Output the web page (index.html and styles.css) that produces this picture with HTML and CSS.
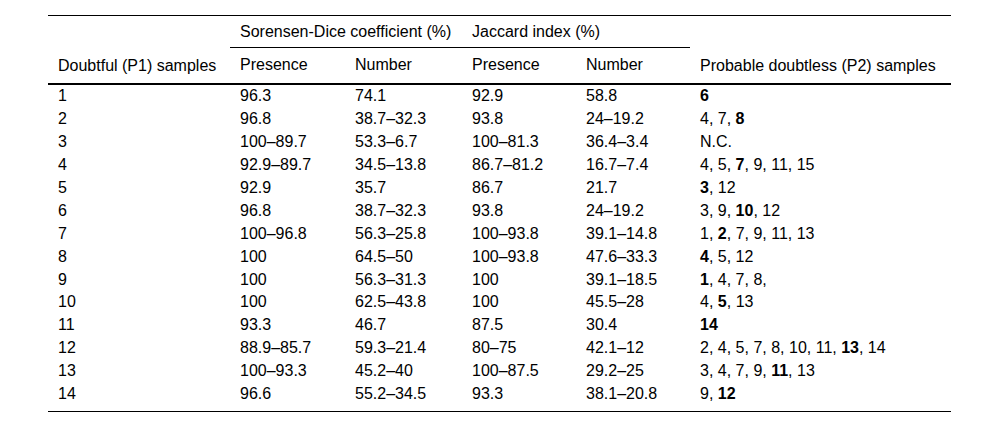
FILE: index.html
```html
<!DOCTYPE html>
<html>
<head>
<meta charset="utf-8">
<link rel="stylesheet" href="styles.css">
</head>
<body>
<table class="data">
  <colgroup>
    <col class="c1"><col class="c2"><col class="c3"><col class="c4"><col class="c5"><col class="c6">
  </colgroup>
  <thead>
    <tr class="h1">
      <th rowspan="2" class="bottom">Doubtful (P1) samples</th>
      <th colspan="2" class="group">Sorensen-Dice coefficient (%)</th>
      <th colspan="2" class="group">Jaccard index (%)</th>
      <th rowspan="2" class="bottom">Probable doubtless (P2) samples</th>
    </tr>
    <tr class="h2">
      <th>Presence</th><th>Number</th><th>Presence</th><th>Number</th>
    </tr>
  </thead>
  <tbody>
    <tr><td>1</td><td>96.3</td><td>74.1</td><td>92.9</td><td>58.8</td><td><b>6</b></td></tr>
    <tr><td>2</td><td>96.8</td><td>38.7–32.3</td><td>93.8</td><td>24–19.2</td><td>4, 7, <b>8</b></td></tr>
    <tr><td>3</td><td>100–89.7</td><td>53.3–6.7</td><td>100–81.3</td><td>36.4–3.4</td><td>N.C.</td></tr>
    <tr><td>4</td><td>92.9–89.7</td><td>34.5–13.8</td><td>86.7–81.2</td><td>16.7–7.4</td><td>4, 5, <b>7</b>, 9, 11, 15</td></tr>
    <tr><td>5</td><td>92.9</td><td>35.7</td><td>86.7</td><td>21.7</td><td><b>3</b>, 12</td></tr>
    <tr><td>6</td><td>96.8</td><td>38.7–32.3</td><td>93.8</td><td>24–19.2</td><td>3, 9, <b>10</b>, 12</td></tr>
    <tr><td>7</td><td>100–96.8</td><td>56.3–25.8</td><td>100–93.8</td><td>39.1–14.8</td><td>1, <b>2</b>, 7, 9, 11, 13</td></tr>
    <tr><td>8</td><td>100</td><td>64.5–50</td><td>100–93.8</td><td>47.6–33.3</td><td><b>4</b>, 5, 12</td></tr>
    <tr><td>9</td><td>100</td><td>56.3–31.3</td><td>100</td><td>39.1–18.5</td><td><b>1</b>, 4, 7, 8,</td></tr>
    <tr><td>10</td><td>100</td><td>62.5–43.8</td><td>100</td><td>45.5–28</td><td>4, <b>5</b>, 13</td></tr>
    <tr><td>11</td><td>93.3</td><td>46.7</td><td>87.5</td><td>30.4</td><td><b>14</b></td></tr>
    <tr><td>12</td><td>88.9–85.7</td><td>59.3–21.4</td><td>80–75</td><td>42.1–12</td><td>2, 4, 5, 7, 8, 10, 11, <b>13</b>, 14</td></tr>
    <tr><td>13</td><td>100–93.3</td><td>45.2–40</td><td>100–87.5</td><td>29.2–25</td><td>3, 4, 7, 9, <b>11</b>, 13</td></tr>
    <tr class="last"><td>14</td><td>96.6</td><td>55.2–34.5</td><td>93.3</td><td>38.1–20.8</td><td>9, <b>12</b></td></tr>
  </tbody>
</table>
</body>
</html>
```
FILE: styles.css
```css
html, body {
  margin: 0;
  padding: 0;
  background: #fff;
}
body {
  padding: 15px 49px 0 48px;
  font-family: "Liberation Sans", Arial, sans-serif;
  font-size: 16px;
  color: #000;
}
.data {
  width: 903px;
  border-collapse: collapse;
  table-layout: fixed;
  border-top: 1px solid #000;
  border-bottom: 1px solid #000;
}
.c1 { width: 182px; }
.c2 { width: 115px; }
.c3 { width: 117px; }
.c4 { width: 114px; }
.c5 { width: 114px; }
.c6 { width: 261px; }
th, td {
  text-align: left;
  font-weight: normal;
  padding: 0 10px;
  white-space: nowrap;
  line-height: 18px;
}
.h1 th {
  height: 31px;
  vertical-align: middle;
}
.h1 th.group {
  border-bottom: 1px solid #000;
}
.h1 th.bottom {
  vertical-align: bottom;
  padding-bottom: 8px;
  border-bottom: 2px solid #000;
}
.h2 th {
  height: 33px;
  padding-top: 0;
  padding-bottom: 2px;
  vertical-align: middle;
  border-bottom: 2px solid #000;
}
td {
  height: 22.9px;
  padding-top: 0;
  padding-bottom: 0;
  vertical-align: middle;
}
td b {
  font-weight: bold;
}
.last td {
  height: auto;
  vertical-align: top;
  padding-top: 2px;
  padding-bottom: 8px;
}
```
